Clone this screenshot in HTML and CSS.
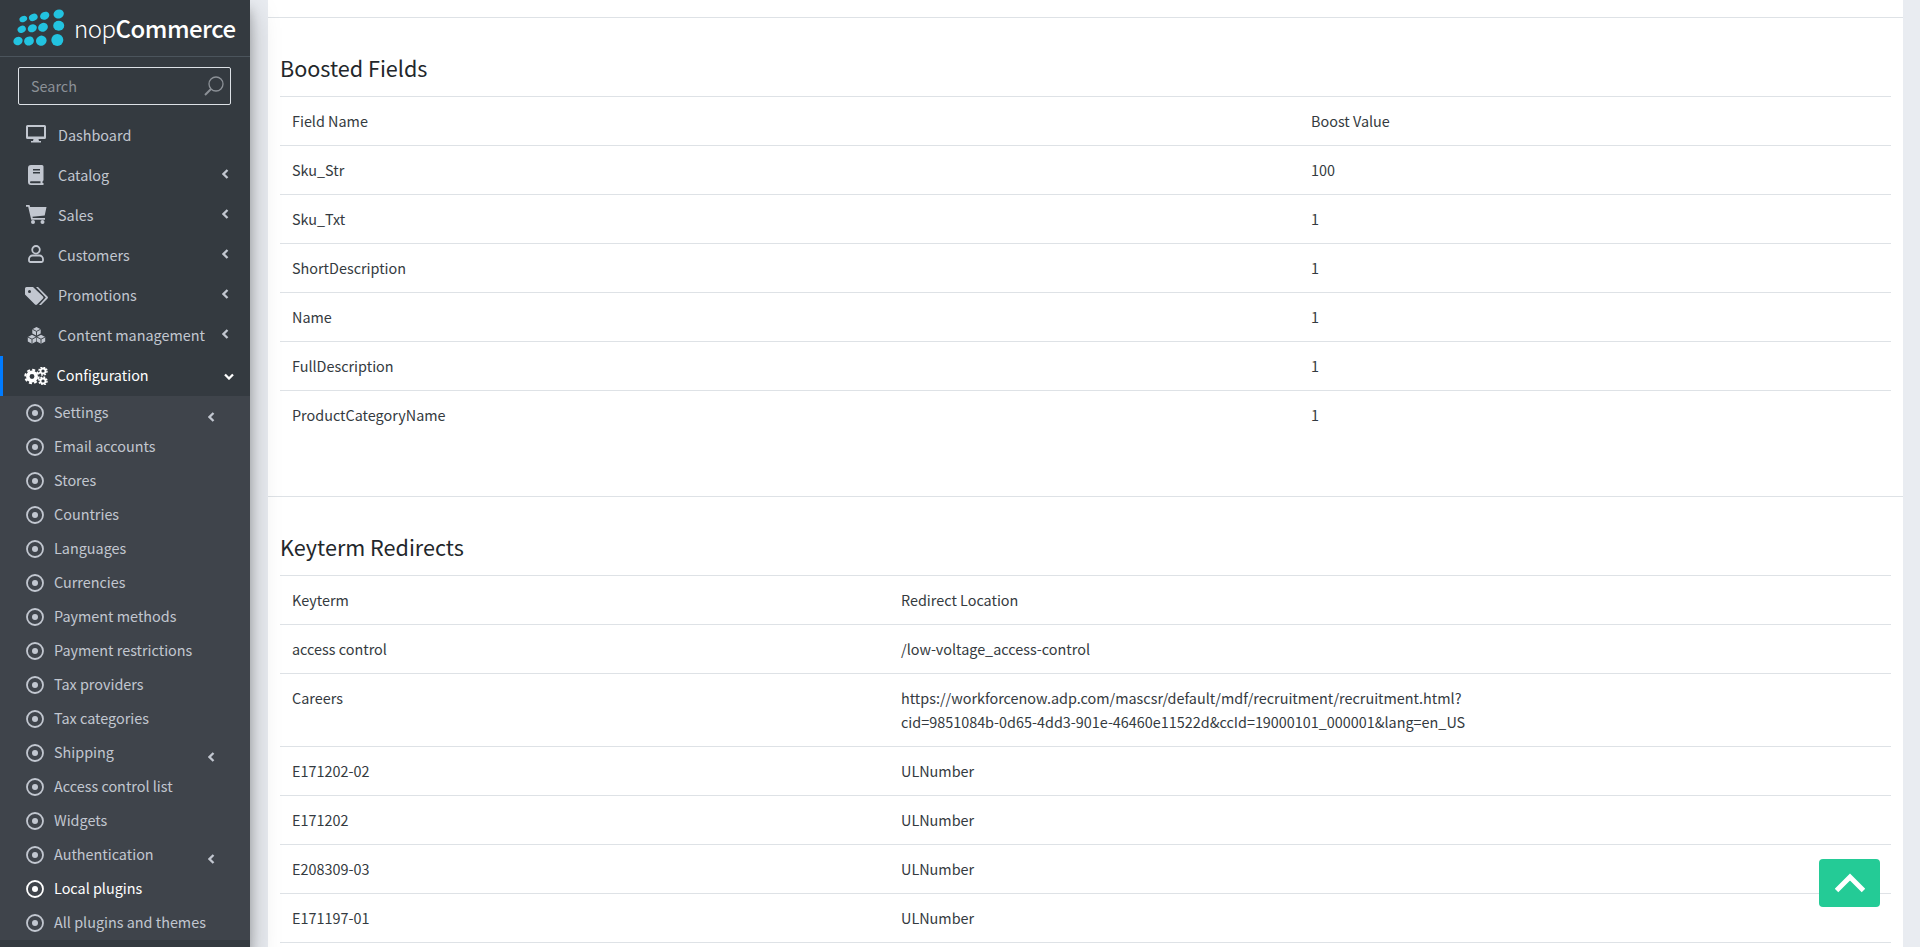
FILE: index.html
```html
<!DOCTYPE html>
<html lang="en">
<head>
<meta charset="utf-8">
<title>nopCommerce</title>
<link rel="stylesheet" href="styles.css">
</head>
<body>
<svg class="defs" width="0" height="0" aria-hidden="true">
  <symbol id="i-desktop" viewBox="0 0 20 18"><path d="M1.5 0h17A1.500 1.500 0 0 1 20 1.500v11a1.500 1.500 0 0 1-1.500 1.500H12.500l.5 2h2v1.500H5V16h2l.5-2H1.500A1.500 1.500 0 0 1 0 12.500v-11A1.500 1.500 0 0 1 1.500 0zM2 2v9.500h16V2z" fill-rule="evenodd"/></symbol>
  <symbol id="i-book" viewBox="0 0 16 20"><path d="M3 0h11a1.500 1.500 0 0 1 1.500 1.500V15a1.500 1.500 0 0 1-1 1.400V18h1v2H3a3 3 0 0 1-3-3V3a3 3 0 0 1 3-3zM5 4v1.500h7V4zM5 7v1.500h7V7zM3 16.200a1 1 0 0 0 0 2h9.500v-2z" fill-rule="evenodd"/></symbol>
  <symbol id="i-cart" viewBox="0 0 21 19"><path d="M0 0h3.500l.6 2H20.500l-1.800 8.500-12.300 1.200.4 1.300H19v1.800H5.200L2.200 1.800H0z"/><circle cx="7" cy="17" r="2"/><circle cx="16.500" cy="17" r="2"/></symbol>
  <symbol id="i-user" viewBox="0 0 16 18"><g fill="none" stroke="currentColor" stroke-width="1.800"><circle cx="8" cy="4.800" r="3.800"/><path d="M4.500 10.500h7a3.500 3.500 0 0 1 3.500 3.500v1.500a1.500 1.500 0 0 1-1.500 1.500h-11A1.500 1.500 0 0 1 1 15.500V14a3.500 3.500 0 0 1 3.500-3.500z"/></g></symbol>
  <symbol id="i-tags" viewBox="0 0 23 18"><path d="M1.500 0H8l10 9.500a1.500 1.500 0 0 1 0 2L12 17.500a1.500 1.500 0 0 1-2 0L0 7.500V1.500A1.500 1.500 0 0 1 1.500 0zM4.500 3a1.500 1.500 0 1 0 0 3 1.500 1.500 0 0 0 0-3z" fill-rule="evenodd"/><path d="M11 0h2l9.500 9.500a1.500 1.500 0 0 1 0 2L16 18h-2l6.800-7.500z"/></symbol>
  <symbol id="i-cubes" viewBox="0 0 19 17">
    <path d="M9.500 0l4.200 2.200v4.400L9.500 8.800 5.300 6.600V2.200zM5 7.800l4.200 2.200v4.500L5 16.800.8 14.500V10zM14 7.800l4.200 2.200v4.500L14 16.800l-4.200-2.300V10z"/>
    <path d="M5.300 2.200l4.200 2.200 4.200-2.200M9.500 4.400v4.400M.8 10L5 12.200 9.200 10M5 12.200v4.600M9.800 10L14 12.200 18.200 10M14 12.200v4.600" fill="none" stroke="#343a40" stroke-width=".9"/>
  </symbol>
  <symbol id="i-cogs" viewBox="0 0 24 18"><g fill="none" stroke="currentColor"><circle cx="8" cy="9.500" r="4.200" stroke-width="3.500"/><circle cx="8" cy="9.500" r="6.700" stroke-width="2" stroke-dasharray="3 2.260"/><circle cx="19" cy="4" r="2.500" stroke-width="1.800"/><circle cx="19" cy="4" r="4" stroke-width="1.400" stroke-dasharray="1.800 1.340"/><circle cx="19" cy="14" r="2.500" stroke-width="1.800"/><circle cx="19" cy="14" r="4" stroke-width="1.400" stroke-dasharray="1.800 1.340"/></g></symbol>
  <symbol id="i-dot" viewBox="0 0 18 18"><circle cx="9" cy="9" r="8" fill="none" stroke="currentColor" stroke-width="1.800"/><circle cx="9" cy="9" r="3"/></symbol>
  <symbol id="i-left" viewBox="0 0 7 10"><path d="M5.500 1L1.500 5l4 4" fill="none" stroke="currentColor" stroke-width="2.300"/></symbol>
  <symbol id="i-down" viewBox="0 0 10 7"><path d="M1 1.500l4 4 4-4" fill="none" stroke="currentColor" stroke-width="2.300"/></symbol>
</svg>

<div class="layout">
  <aside class="sidebar">
    <div class="brand">
      <svg class="brand-dots" viewBox="13 8 52 40" aria-hidden="true">
        <g fill="#22c3e0">
          <ellipse cx="23.300" cy="19" rx="4" ry="3" transform="rotate(-25 23.300 19)"/>
          <ellipse cx="33.300" cy="17.300" rx="4.500" ry="3.500" transform="rotate(-25 33.300 17.300)"/>
          <ellipse cx="44.700" cy="15.700" rx="4.800" ry="3.800" transform="rotate(-25 44.700 15.700)"/>
          <ellipse cx="58.700" cy="14" rx="5.200" ry="4.500" transform="rotate(-20 58.700 14)"/>
          <ellipse cx="21.700" cy="29.300" rx="4.300" ry="3.400" transform="rotate(-25 21.700 29.300)"/>
          <ellipse cx="32.300" cy="28.300" rx="4.700" ry="3.800" transform="rotate(-25 32.300 28.300)"/>
          <ellipse cx="43" cy="27.300" rx="5" ry="4.300" transform="rotate(-25 43 27.300)"/>
          <ellipse cx="58.700" cy="25.700" rx="5.500" ry="5"/>
          <ellipse cx="18" cy="41" rx="4.700" ry="4" transform="rotate(-25 18 41)"/>
          <ellipse cx="29" cy="41" rx="5" ry="4.500" transform="rotate(-25 29 41)"/>
          <ellipse cx="41.300" cy="40.700" rx="5.400" ry="5" transform="rotate(-25 41.300 40.700)"/>
          <circle cx="57.300" cy="40" r="6"/>
        </g>
      </svg>
      <span class="brand-text"><span class="brand-light">nop</span>Commerce</span>
    </div>
    <div class="search">
      <span class="search-label">Search</span>
      <svg class="search-icon" viewBox="0 0 20 20" aria-hidden="true"><circle cx="12" cy="8" r="7" fill="none" stroke="currentColor" stroke-width="1.300"/><path d="M7 13l-6 6" stroke="currentColor" stroke-width="2" fill="none"/></svg>
    </div>
    <nav class="menu">
      <a class="item"><svg class="ic ic-desktop"><use href="#i-desktop"/></svg><span class="lbl">Dashboard</span></a>
      <a class="item"><svg class="ic ic-book"><use href="#i-book"/></svg><span class="lbl">Catalog</span><svg class="chev"><use href="#i-left"/></svg></a>
      <a class="item"><svg class="ic ic-cart"><use href="#i-cart"/></svg><span class="lbl">Sales</span><svg class="chev"><use href="#i-left"/></svg></a>
      <a class="item"><svg class="ic ic-user"><use href="#i-user"/></svg><span class="lbl">Customers</span><svg class="chev"><use href="#i-left"/></svg></a>
      <a class="item"><svg class="ic ic-tags"><use href="#i-tags"/></svg><span class="lbl">Promotions</span><svg class="chev"><use href="#i-left"/></svg></a>
      <a class="item"><svg class="ic ic-cubes"><use href="#i-cubes"/></svg><span class="lbl">Content management</span><svg class="chev"><use href="#i-left"/></svg></a>
      <a class="item active"><svg class="ic ic-cogs"><use href="#i-cogs"/></svg><span class="lbl">Configuration</span><svg class="chev-down"><use href="#i-down"/></svg></a>
    </nav>
    <nav class="submenu">
      <a class="sub"><svg class="dot"><use href="#i-dot"/></svg><span class="lbl">Settings</span><svg class="chev-sub"><use href="#i-left"/></svg></a>
      <a class="sub"><svg class="dot"><use href="#i-dot"/></svg><span class="lbl">Email accounts</span></a>
      <a class="sub"><svg class="dot"><use href="#i-dot"/></svg><span class="lbl">Stores</span></a>
      <a class="sub"><svg class="dot"><use href="#i-dot"/></svg><span class="lbl">Countries</span></a>
      <a class="sub"><svg class="dot"><use href="#i-dot"/></svg><span class="lbl">Languages</span></a>
      <a class="sub"><svg class="dot"><use href="#i-dot"/></svg><span class="lbl">Currencies</span></a>
      <a class="sub"><svg class="dot"><use href="#i-dot"/></svg><span class="lbl">Payment methods</span></a>
      <a class="sub"><svg class="dot"><use href="#i-dot"/></svg><span class="lbl">Payment restrictions</span></a>
      <a class="sub"><svg class="dot"><use href="#i-dot"/></svg><span class="lbl">Tax providers</span></a>
      <a class="sub"><svg class="dot"><use href="#i-dot"/></svg><span class="lbl">Tax categories</span></a>
      <a class="sub"><svg class="dot"><use href="#i-dot"/></svg><span class="lbl">Shipping</span><svg class="chev-sub"><use href="#i-left"/></svg></a>
      <a class="sub"><svg class="dot"><use href="#i-dot"/></svg><span class="lbl">Access control list</span></a>
      <a class="sub"><svg class="dot"><use href="#i-dot"/></svg><span class="lbl">Widgets</span></a>
      <a class="sub"><svg class="dot"><use href="#i-dot"/></svg><span class="lbl">Authentication</span><svg class="chev-sub"><use href="#i-left"/></svg></a>
      <a class="sub current"><svg class="dot"><use href="#i-dot"/></svg><span class="lbl">Local plugins</span></a>
      <a class="sub"><svg class="dot"><use href="#i-dot"/></svg><span class="lbl">All plugins and themes</span></a>
    </nav>
  </aside>

  <main class="content">
    <div class="card">
      <section class="block">
        <h2 class="block-title">Boosted Fields</h2>
        <table class="grid">
          <colgroup><col class="col-boost-a"><col></colgroup>
          <tr><td>Field Name</td><td>Boost Value</td></tr>
          <tr><td>Sku_Str</td><td>100</td></tr>
          <tr><td>Sku_Txt</td><td>1</td></tr>
          <tr><td>ShortDescription</td><td>1</td></tr>
          <tr><td>Name</td><td>1</td></tr>
          <tr><td>FullDescription</td><td>1</td></tr>
          <tr><td>ProductCategoryName</td><td>1</td></tr>
        </table>
      </section>
      <section class="block">
        <h2 class="block-title">Keyterm Redirects</h2>
        <table class="grid">
          <colgroup><col class="col-key-a"><col></colgroup>
          <tr><td>Keyterm</td><td>Redirect Location</td></tr>
          <tr><td>access control</td><td>/low-voltage_access-control</td></tr>
          <tr><td>Careers</td><td>https://workforcenow.adp.com/mascsr/default/mdf/recruitment/recruitment.html?<br>cid=9851084b-0d65-4dd3-901e-46460e11522d&amp;ccId=19000101_000001&amp;lang=en_US</td></tr>
          <tr><td>E171202-02</td><td>ULNumber</td></tr>
          <tr><td>E171202</td><td>ULNumber</td></tr>
          <tr><td>E208309-03</td><td>ULNumber</td></tr>
          <tr><td>E171197-01</td><td>ULNumber</td></tr>
          <tr><td>&nbsp;</td><td>&nbsp;</td></tr>
        </table>
      </section>
    </div>
  </main>
</div>

<a class="to-top" aria-label="Back to top"><svg viewBox="0 0 30 20" aria-hidden="true"><path d="M1.500 17.500L15 4l13.500 13.500" fill="none" stroke="#fff" stroke-width="5"/></svg></a>
</body>
</html>
```

FILE: styles.css
```css
* { box-sizing: border-box; }
html, body { margin: 0; height: 100%; overflow: hidden; }
body {
  font-family: "Noto Sans CJK SC", "Noto Sans", sans-serif;
  font-size: 14.4px;
  line-height: 24px;
  color: #343a40;
  background: #e9ecf1;
}
.defs { position: absolute; }
.layout { display: flex; height: 947px; }

.sidebar {
  position: relative;
  z-index: 2;
  flex: 0 0 250px;
  height: 947px;
  background: #343a40;
  color: #c2c7d0;
  box-shadow: 0 14px 28px rgba(0,0,0,.25), 0 10px 10px rgba(0,0,0,.22);
  overflow: hidden;
}
.brand {
  display: flex;
  align-items: center;
  height: 57px;
  padding: 0 0 0 13px;
  border-bottom: 1px solid #4b545c;
}
.brand-dots { width: 52px; height: 40px; flex: none; margin: 0 9px 0 0; }
.brand-text { color: #fff; font-size: 24px; line-height: 30px; font-weight: 500; letter-spacing: -.5px; }
.brand-light { font-weight: 300; }

.search {
  display: flex;
  align-items: center;
  justify-content: space-between;
  height: 38px;
  margin: 10px 19px 0 18px;
  padding: 0 6px 0 12px;
  border: 1px solid #dde1e6;
  border-radius: 2px;
}
.search-label { color: #8c9197; }
.search-icon { width: 20px; height: 20px; color: #8c9197; }

.menu { margin-top: 11px; }
.item {
  position: relative;
  display: flex;
  align-items: center;
  height: 40px;
  padding: 0 0 2px 58px;
}
.ic { position: absolute; fill: currentColor; }
.ic-desktop { left: 26px; top: 9px; width: 20px; height: 18px; }
.ic-book { left: 28px; top: 9px; width: 16px; height: 20px; }
.ic-cart { left: 26px; top: 9px; width: 21px; height: 19px; }
.ic-user { left: 28px; top: 9px; width: 16px; height: 18px; }
.ic-tags { left: 25px; top: 11px; width: 23px; height: 18px; }
.ic-cubes { left: 27px; top: 11px; width: 19px; height: 17px; }
.ic-cogs { left: 24px; top: 11px; width: 24px; height: 18px; }
.chev { position: absolute; left: 222px; top: 13px; width: 7px; height: 10px; }
.chev-down { position: absolute; left: 224px; top: 17px; width: 10px; height: 7px; }
.item.active { color: #fff; box-shadow: inset 3px 0 0 #007bff; padding-left: 56.5px; }

.submenu { background: #3f444b; }
.sub {
  position: relative;
  display: flex;
  align-items: center;
  height: 34px;
  padding: 0 0 2px 54px;
}
.dot { position: absolute; left: 26px; top: 8px; width: 18px; height: 18px; fill: currentColor; }
.chev-sub { position: absolute; left: 208px; top: 16px; width: 7px; height: 10px; }
.sub.current { color: #fff; }

.content { flex: 1; min-width: 0; padding: 0 17px 0 18px; overflow: hidden; }
.card { background: #fff; padding-top: 17px; }
.block { border-top: 1px solid #dee2e6; padding: 34px 12px 57px; }
.block-title { margin: 0 0 12px; font-size: 21.6px; line-height: 32px; font-weight: 400; color: #23272b; }
.grid { width: 100%; table-layout: fixed; border-collapse: separate; border-spacing: 0; }
.grid td { border-top: 1px solid #dee2e6; padding: 12px; vertical-align: top; }
.col-boost-a { width: 1019px; }
.col-key-a { width: 609px; }

.to-top {
  position: fixed;
  left: 1819px;
  top: 859px;
  display: flex;
  align-items: center;
  justify-content: center;
  width: 61px;
  height: 48px;
  border-radius: 4px;
  background: #24cb96;
}
.to-top svg { width: 30px; height: 20px; }
```
